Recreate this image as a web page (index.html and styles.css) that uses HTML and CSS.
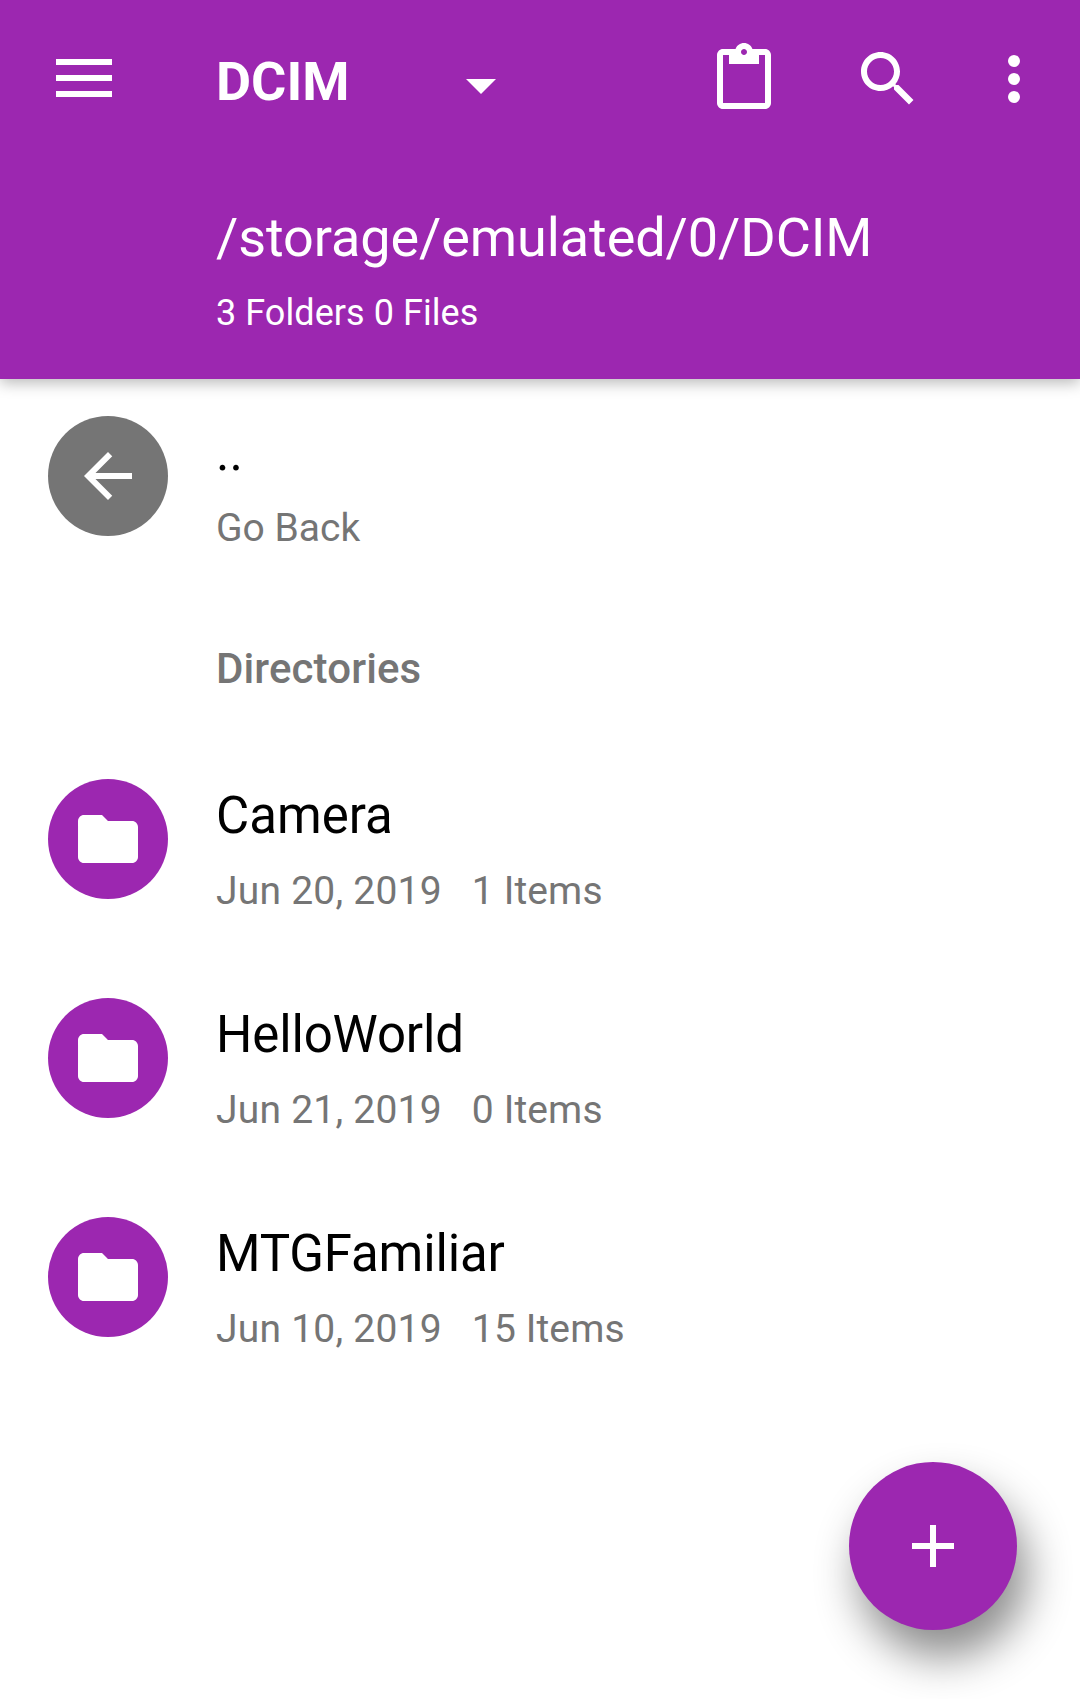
FILE: index.html
```html
<!DOCTYPE html>
<html lang="en">
<head>
<meta charset="utf-8">
<title>DCIM</title>
<link rel="stylesheet" href="styles.css">
</head>
<body>
<header class="appbar">
  <div class="toolbar">
    <svg class="menu" viewBox="0 0 56 38" aria-label="Menu"><path d="M0 0h56v6H0zM0 16h56v6H0zM0 32h56v6H0z"/></svg>
    <h1 class="title">DCIM</h1>
    <svg class="caret" viewBox="0 0 10 5"><path d="M0 0l5 5 5-5z"/></svg>
    <nav class="actions">
      <svg class="icon" viewBox="0 0 24 24" aria-label="Paste"><path d="M19 2h-4.18C14.4.84 13.3 0 12 0c-1.3 0-2.4.84-2.82 2H5c-1.1 0-2 .9-2 2v16c0 1.1.9 2 2 2h14c1.1 0 2-.9 2-2V4c0-1.1-.9-2-2-2zm-7 0c.55 0 1 .45 1 1s-.45 1-1 1-1-.45-1-1 .45-1 1-1zm7 18H5V4h2v3h10V4h2v16z"/></svg>
      <svg class="icon" viewBox="0 0 24 24" aria-label="Search"><path d="M15.5 14h-.79l-.28-.27C15.41 12.59 16 11.11 16 9.5 16 5.91 13.09 3 9.5 3S3 5.91 3 9.5 5.91 16 9.5 16c1.61 0 3.09-.59 4.23-1.57l.27.28v.79l5 4.99L20.49 19l-4.99-5zm-6 0C7.01 14 5 11.99 5 9.5S7.01 5 9.5 5 14 7.01 14 9.5 11.99 14 9.5 14z"/></svg>
      <svg class="icon more" viewBox="0 0 24 24" aria-label="More"><circle cx="12" cy="6" r="2"/><circle cx="12" cy="12" r="2"/><circle cx="12" cy="18" r="2"/></svg>
    </nav>
  </div>
  <div class="path">/storage/emulated/0/DCIM</div>
  <div class="summary">3 Folders 0 Files</div>
</header>
<main class="list">
  <div class="row">
    <span class="badge back"><svg class="icon" viewBox="0 0 24 24"><path d="M20 11H7.83l5.59-5.59L12 4l-8 8 8 8 1.41-1.41L7.83 13H20v-2z"/></svg></span>
    <div class="text"><div class="name">..</div><div class="meta">Go Back</div></div>
  </div>
  <h2 class="section">Directories</h2>
  <div class="row">
    <span class="badge"><svg class="icon" viewBox="0 0 24 24"><path d="M10 4H4c-1.1 0-1.99.9-1.99 2L2 18c0 1.1.9 2 2 2h16c1.1 0 2-.9 2-2V8c0-1.1-.9-2-2-2h-8l-2-2z"/></svg></span>
    <div class="text"><div class="name">Camera</div><div class="meta"><span class="date">Jun 20, 2019</span><span class="count">1 Items</span></div></div>
  </div>
  <div class="row">
    <span class="badge"><svg class="icon" viewBox="0 0 24 24"><path d="M10 4H4c-1.1 0-1.99.9-1.99 2L2 18c0 1.1.9 2 2 2h16c1.1 0 2-.9 2-2V8c0-1.1-.9-2-2-2h-8l-2-2z"/></svg></span>
    <div class="text"><div class="name tight">HelloWorld</div><div class="meta"><span class="date">Jun 21, 2019</span><span class="count">0 Items</span></div></div>
  </div>
  <div class="row">
    <span class="badge"><svg class="icon" viewBox="0 0 24 24"><path d="M10 4H4c-1.1 0-1.99.9-1.99 2L2 18c0 1.1.9 2 2 2h16c1.1 0 2-.9 2-2V8c0-1.1-.9-2-2-2h-8l-2-2z"/></svg></span>
    <div class="text"><div class="name tight">MTGFamiliar</div><div class="meta"><span class="date">Jun 10, 2019</span><span class="count">15 Items</span></div></div>
  </div>
</main>
<button class="fab" aria-label="Add"><svg class="icon" viewBox="0 0 24 24"><path d="M19 13h-6v6h-2v-6H5v-2h6V5h2v6h6v2z"/></svg></button>
</body>
</html>
```
FILE: styles.css
```css
* { box-sizing: border-box; }

body {
  margin: 0;
  min-height: 1699px;
  background: #fff;
  color: #000;
  font-family: Roboto, sans-serif;
}

svg { display: block; fill: #fff; flex: none; }
.icon { width: 72px; height: 72px; }

.appbar {
  height: 379px;
  background: #9c27b0;
  color: #fff;
  box-shadow: 0 4px 14px rgba(0, 0, 0, .28);
}

.toolbar {
  display: flex;
  align-items: center;
  height: 158px;
  padding-left: 56px;
}
.menu { width: 56px; height: 38px; margin: 0 104px 2px 0; }
.title {
  width: 250px;
  margin: 6px 0 0;
  font-size: 54px;
  line-height: 64px;
  font-weight: 700;
}
.caret { width: 30px; height: 15px; margin-top: 15px; }
.actions {
  display: flex;
  gap: 72px;
  margin-left: 212px;
}
.more { margin-left: -18px; }

.path {
  margin-top: 48px;
  padding-left: 216px;
  font-size: 54px;
  line-height: 64px;
  letter-spacing: -.08px;
}
.summary {
  margin-top: 21px;
  padding-left: 216px;
  font-size: 36px;
  line-height: 44px;
  letter-spacing: .06px;
}

.list { padding: 37px 48px 0; }
.row { display: flex; gap: 48px; height: 219px; }
.badge {
  display: flex;
  align-items: center;
  justify-content: center;
  flex: none;
  width: 120px;
  height: 120px;
  border-radius: 50%;
  background: #9c27b0;
}
.back { background: #757575; }
.text { padding-top: 7px; }
.name { font-size: 51px; line-height: 60px; }
.tight { letter-spacing: -.15px; }
.meta {
  display: flex;
  gap: 30px;
  margin-top: 21px;
  font-size: 39px;
  line-height: 48px;
  color: #757575;
}
.date { letter-spacing: .23px; }
.count { letter-spacing: .12px; }
.section {
  height: 144px;
  margin: 0;
  padding: 9px 0 0 168px;
  font-size: 42px;
  line-height: 50px;
  font-weight: 500;
  letter-spacing: .12px;
  color: #757575;
}

.fab {
  position: absolute;
  left: 849px;
  top: 1462px;
  display: flex;
  align-items: center;
  justify-content: center;
  width: 168px;
  height: 168px;
  padding: 0;
  border: 0;
  border-radius: 50%;
  background: #9c27b0;
  box-shadow: 10px 27px 44px rgba(0, 0, 0, .45);
}
```
